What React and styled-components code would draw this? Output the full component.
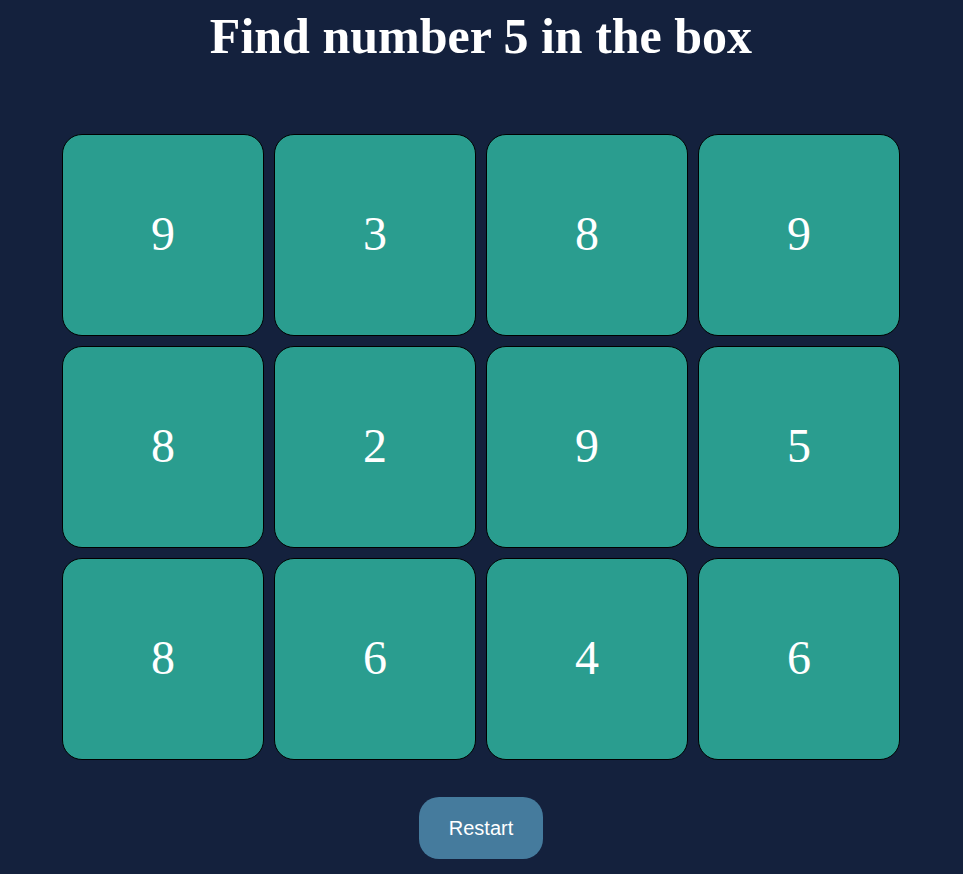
import React from "react";
import styled, { createGlobalStyle } from "styled-components";

const Global = createGlobalStyle`
  html, body {
    margin: 0;
    padding: 0;
    background: #14213d;
  }
  body {
    font-family: "Liberation Serif", "Times New Roman", serif;
    min-height: 874px;
  }
`;

const Page = styled.main`
  display: flex;
  flex-direction: column;
  align-items: center;
  padding-top: 7px;
  padding-right: 1px;
`;

const Title = styled.h1`
  margin: 0;
  font-family: "Liberation Serif", "Times New Roman", serif;
  font-weight: bold;
  font-size: 50px;
  color: #ffffff;
`;

const Grid = styled.div`
  display: grid;
  grid-template-columns: repeat(4, 202px);
  grid-auto-rows: 202px;
  gap: 10px;
  margin-top: 69px;
`;

const Cell = styled.button`
  box-sizing: border-box;
  display: flex;
  align-items: center;
  justify-content: center;
  width: 202px;
  height: 202px;
  padding: 0 0 3px;
  background: #2a9d8f;
  border: 1px solid #000000;
  border-radius: 20px;
  color: #ffffff;
  font-family: "Liberation Serif", "Times New Roman", serif;
  font-size: 48px;
  cursor: pointer;
`;

const Restart = styled.button`
  margin-top: 37px;
  padding: 0 30px;
  height: 62px;
  border: none;
  border-radius: 20px;
  background: #457b9d;
  color: #ffffff;
  font-family: "Liberation Sans", Arial, sans-serif;
  font-size: 20px;
  cursor: pointer;
`;

const numbers = [9, 3, 8, 9, 8, 2, 9, 5, 8, 6, 4, 6];

export default function App() {
  return (
    <>
      <Global />
      <Page>
        <Title>Find number 5 in the box</Title>
        <Grid>
          {numbers.map((n, i) => (
            <Cell key={i}>{n}</Cell>
          ))}
        </Grid>
        <Restart>Restart</Restart>
      </Page>
    </>
  );
}
